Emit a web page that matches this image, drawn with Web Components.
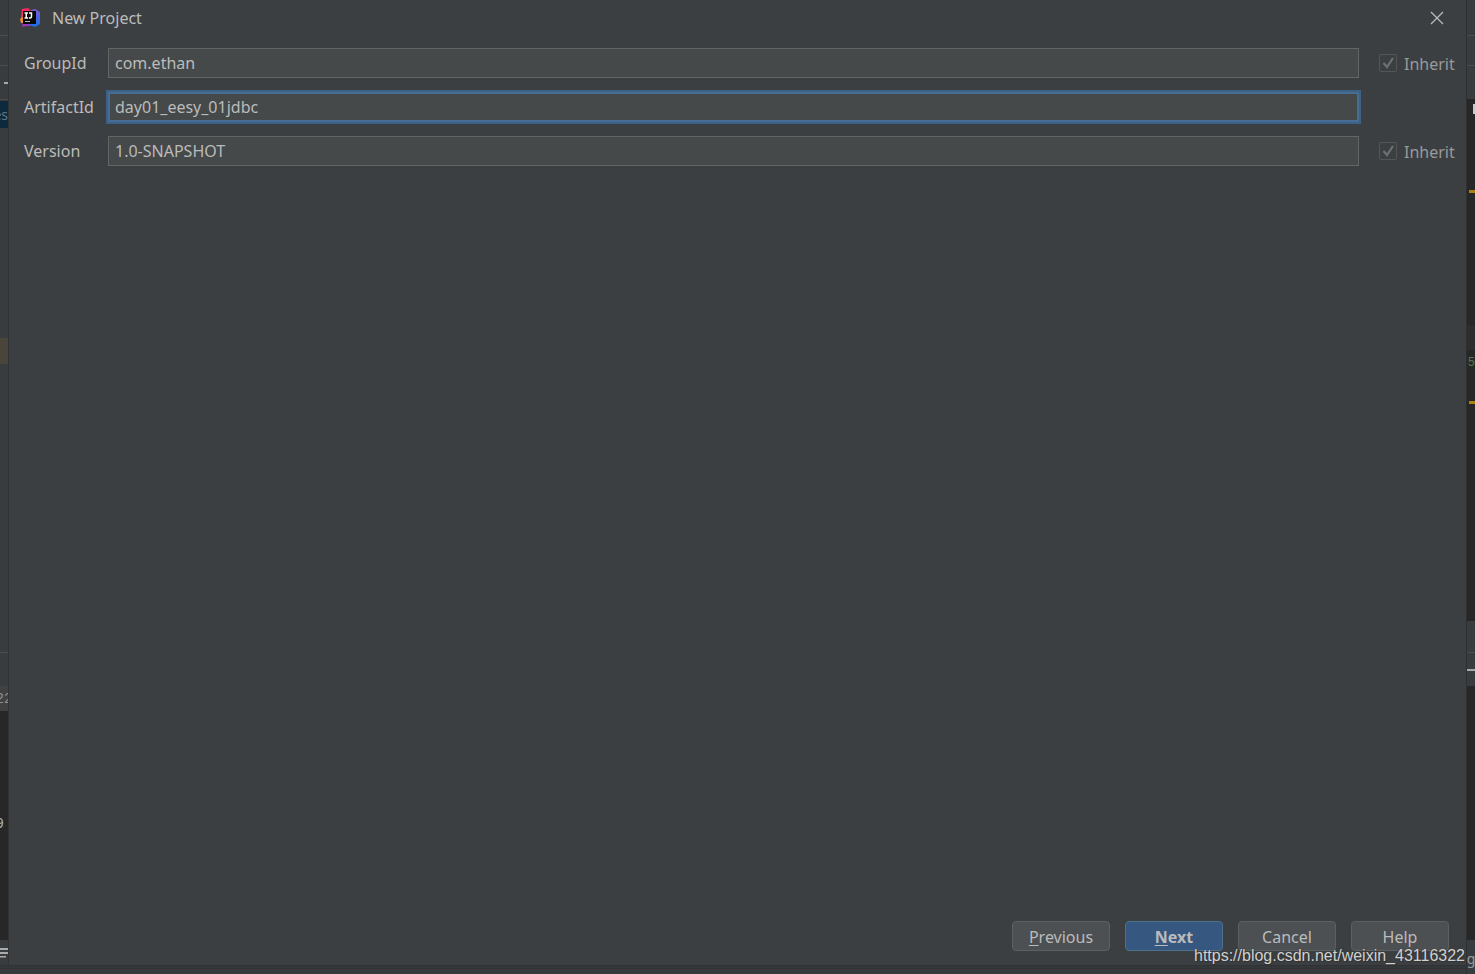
<!DOCTYPE html>
<html lang="en">
<head>
<meta charset="utf-8">
<title>New Project</title>
<style>
html, body { margin: 0; height: 100%; }
body {
  background: #3c3f41; color: #bbbbbb; overflow: hidden;
  font: 16px/24px "Noto Sans", "Open Sans", sans-serif;
}
</style>
</head>
<body>
<ide-workspace>
  <ide-edge slot="left" side="left">
    <ide-band size="35" line></ide-band>
    <ide-band size="29" line></ide-band>
    <ide-band size="33" line><i class="dash"></i></ide-band>
    <ide-band size="1"></ide-band>
    <ide-band size="27" tone="selected">es</ide-band>
    <ide-band size="210"></ide-band>
    <ide-band size="26" tone="olive"></ide-band>
    <ide-band size="288" line></ide-band>
    <ide-band size="33"></ide-band>
    <ide-band size="25" tone="tab" kind="mono">22</ide-band>
    <ide-band size="100" tone="dark"></ide-band>
    <ide-band size="25" tone="dark" kind="value">9</ide-band>
    <ide-band tone="dark" grow></ide-band>
    <ide-band size="25"><i class="menu"></i></ide-band>
  </ide-edge>
  <project-dialog slot="dialog"></project-dialog>
  <ide-edge slot="right" side="right">
    <ide-band size="35" line></ide-band>
    <ide-band size="29" line></ide-band>
    <ide-band size="33"></ide-band>
    <ide-band size="19" tone="dark"><i class="caret"></i></ide-band>
    <ide-band size="72" tone="dark"></ide-band>
    <ide-band size="3" tone="dark"><i class="mark"></i></ide-band>
    <ide-band size="132" tone="dark"></ide-band>
    <ide-band size="25" tone="row"></ide-band>
    <ide-band size="25" tone="dark" kind="string">55</ide-band>
    <ide-band size="26" tone="dark"></ide-band>
    <ide-band size="3" tone="dark"><i class="mark"></i></ide-band>
    <ide-band size="217" tone="dark"></ide-band>
    <ide-band size="31" line></ide-band>
    <ide-band size="33"><i class="rule"></i></ide-band>
    <ide-band tone="dark" grow></ide-band>
    <ide-band size="34" kind="status">g</ide-band>
  </ide-edge>
  <page-watermark slot="watermark">https://blog.csdn.net/weixin_43116322</page-watermark>
</ide-workspace>

<script>
class BaseElement extends HTMLElement {
  constructor() {
    super();
    this.attachShadow({ mode: 'open' });
    this.render();
  }
  render() { this.shadowRoot.innerHTML = this.constructor.markup; }
}

customElements.define('ide-workspace', class extends BaseElement {
  static markup = `<style>
    :host { display: grid; grid-template: minmax(0, 1fr) 9px / 9px minmax(0, 1fr) 9px; height: 100vh; position: relative; }
    slot { display: contents; }
    .bottom { grid-row: 2; grid-column: 1 / 3; background: linear-gradient(#303234 0 1px, #35383a 1px 3px, #303234 3px 4px, #383b3d 4px); }
    ::slotted([slot=left]) { grid-row: 1; grid-column: 1; }
    ::slotted([slot=dialog]) { grid-row: 1; grid-column: 2; }
    ::slotted([slot=right]) { grid-row: 1 / 3; grid-column: 3; }
  </style>
  <slot name="left"></slot><slot name="dialog"></slot><slot name="right"></slot>
  <div class="bottom"></div><slot name="watermark"></slot>`;
});

customElements.define('ide-edge', class extends BaseElement {
  static markup = `<style>
    :host { display: flex; flex-direction: column; min-width: 0; overflow: hidden; background: #393c3e; box-sizing: border-box; }
    :host([side=left]) { border-right: 1px solid #303234; }
    :host([side=right]) { border-left: 1px solid #2d2f30; }
  </style><slot></slot>`;
});

customElements.define('ide-band', class extends BaseElement {
  static markup = `<style>
    :host { display: flex; flex: none; box-sizing: content-box; align-items: center; justify-content: flex-end; overflow: hidden; color: #8b8f92; font-size: 14px; line-height: 20px; }
    :host([grow]) { flex: 1; }
    :host([line]) { border-bottom: 1px solid #4a4c4e; }
    :host([tone=selected]) { background: #0d293e; color: #5d7786; }
    :host([tone=olive]) { background: #49453b; }
    :host([tone=tab]) { background: #414141; }
    :host([tone=dark]) { background: #272727; }
    :host([tone=row]) { background: #2d2d2d; }
    :host([kind=mono]), :host([kind=string]), :host([kind=value]) { font-family: "Liberation Mono", monospace; line-height: 24px; }
    :host([kind=mono]) { justify-content: center; }
    :host([kind=value]) { color: #a8b0b8; padding-right: 4px; }
    :host([kind=string]) { color: #557a4d; font-size: 12px; line-height: 26px; }
    :host([kind=status]) { align-items: flex-end; justify-content: center; color: #9a9da0; line-height: 30px; }
    ::slotted(i) { display: block; flex: none; }
    ::slotted(.dash) { width: 4px; height: 2px; background: #a8a8a8; }
    ::slotted(.mark) { width: 6px; height: 3px; background: #b07f11; }
    ::slotted(.caret) { width: 2px; height: 10px; background: #c8c8c8; }
    ::slotted(.rule) { width: 9px; height: 2px; background: #a6a8aa; }
    ::slotted(.menu) { width: 8px; height: 10px; background: linear-gradient(#aaa 0 2px, transparent 2px 4px, #aaa 4px 6px, transparent 6px 8px, #aaa 8px); clip-path: polygon(0 0, 100% 0, 100% 3px, 4px 3px, 4px 4px, 100% 4px, 100% 7px, 6px 7px, 6px 100%, 0 100%); }
  </style><slot></slot>`;
  connectedCallback() {
    if (this.hasAttribute('size')) this.style.height = this.getAttribute('size') + 'px';
  }
});

customElements.define('product-logo', class extends BaseElement {
  static markup = `<style>
    :host { display: block; width: 20px; height: 20px; }
    svg { display: block; }
  </style>
  <svg width="20" height="20" viewBox="0 0 20 20" aria-hidden="true">
    <defs><linearGradient id="r" x2="0" y2="1"><stop stop-color="#ff2864"/><stop offset="1" stop-color="#fb3260"/></linearGradient>
    <linearGradient id="b" x2="0" y2="1"><stop stop-color="#7b5ad2"/><stop offset="1" stop-color="#176ff0"/></linearGradient></defs>
    <path fill="url(#r)" d="M2 1 8 0l4 4v8H4L1 10Z"/>
    <path fill="#f58b24" d="M0 11 4 8v7H1Z"/>
    <path fill="#9d35bb" d="M3 14h8v4l-5 0-4 1Z"/>
    <path fill="url(#b)" d="m11 2 4-1 5 3v12l-5 3-5-2Z"/>
    <path fill="#080808" d="M3 3h13v13H3Z"/>
    <path fill="none" stroke="#fff" stroke-width="1.500" d="M4.500 5H8M6.250 5v5M4.500 10H8M9 5h2.500v3.500Q11.500 10 10 10H8.800"/>
    <path fill="#bbb" d="M5 13h5v1H5z"/>
  </svg>`;
});

customElements.define('title-bar', class extends BaseElement {
  static markup = `<style>
    :host { display: flex; align-items: center; height: 36px; padding: 0 21px 0 11px; gap: 12px; }
    h1 { flex: 1; margin: 0; font: inherit; }
    button { display: block; padding: 0; border: 0; background: none; color: #b8babb; width: 16px; height: 16px; }
    svg { display: block; }
  </style>
  <product-logo></product-logo><h1><slot></slot></h1>
  <button type="button" aria-label="Close"><svg width="16" height="16" viewBox="0 0 16 16"><path d="m2 2 12 12M14 2 2 14" fill="none" stroke="currentColor" stroke-width="1.300"/></svg></button>`;
});

customElements.define('form-row', class extends BaseElement {
  render() {
    const label = this.getAttribute('label');
    this.shadowRoot.innerHTML = `<style>
      :host { display: grid; grid-template-columns: 84px minmax(0, 1fr) 72px; align-items: center; height: 30px; }
      input.text { box-sizing: border-box; width: 100%; height: 30px; margin: 0; display: block; padding: 0 6px; border: 1px solid #646464; border-radius: 0; background: #45494a; color: inherit; font: inherit; outline: none; }
      :host([active]) input.text { border-color: #466d94; box-shadow: 0 0 0 2px #3d6185, inset 0 0 0 1px #466d94; }
      .field { margin-right: 20px; }
      .inherit { display: flex; align-items: center; gap: 8px; color: #999999; padding-top: 2px; }
      .inherit input { appearance: none; flex: none; box-sizing: border-box; width: 18px; height: 18px; margin: 0 -1px 2px 0; border: 1px solid #545556; border-radius: 2px;
        background: url("data:image/svg+xml,%3Csvg xmlns='http://www.w3.org/2000/svg' viewBox='0 0 16 16'%3E%3Cpath d='m3.500 8 3.500 4 6-9' fill='none' stroke='%23707172' stroke-width='2.200'/%3E%3C/svg%3E") center / 16px 16px no-repeat; }
    </style>
    <label for="value">${label}</label>
    <div class="field"><input class="text" id="value" type="text" value="${this.getAttribute('value')}" spellcheck="false"></div>
    ${this.hasAttribute('inherit') ? '<label class="inherit"><input type="checkbox" checked disabled>Inherit</label>' : ''}`;
  }
});

customElements.define('dialog-button', class extends BaseElement {
  static markup = `<style>
    :host { display: block; width: 98px; }
    button { display: block; box-sizing: border-box; width: 100%; height: 30px; padding: 2px 0 0; border: 1px solid #5e6060; border-radius: 4px; background: #4c5052; color: inherit; font: inherit; }
    :host([primary]) button { background: #365880; border-color: #4c708c; font-weight: 700; }
    ::slotted(u) { text-underline-offset: 2px; }
  </style><button type="button"><slot></slot></button>`;
});

customElements.define('project-dialog', class extends BaseElement {
  static markup = `<style>
    :host { display: flex; flex-direction: column; background: #3c3f41; }
    form { display: flex; flex-direction: column; gap: 14px; padding: 12px 15px 0; flex: 1; }
    footer { display: flex; justify-content: flex-end; gap: 15px; padding: 0 17px 14px 15px; }
  </style>
  <title-bar>New Project</title-bar>
  <form id="fields"></form>
  <footer>
    <dialog-button><u>P</u>revious</dialog-button>
    <dialog-button primary><u>N</u>ext</dialog-button>
    <dialog-button>Cancel</dialog-button>
    <dialog-button>Help</dialog-button>
  </footer>`;
  render() {
    super.render();
    this.shadowRoot.getElementById('fields').innerHTML = `
      <form-row label="GroupId" value="com.ethan" inherit></form-row>
      <form-row label="ArtifactId" value="day01_eesy_01jdbc" active></form-row>
      <form-row label="Version" value="1.0-SNAPSHOT" inherit></form-row>`;
  }
});

customElements.define('page-watermark', class extends BaseElement {
  static markup = `<style>
    :host { position: absolute; right: 10px; bottom: 9px; font: 16px/18px "Liberation Sans", Arial, sans-serif; color: #d0d1d1; text-shadow: 0 0 1px #333, 1px 1px 1px #333; }
  </style><slot></slot>`;
});
</script>
</body>
</html>
